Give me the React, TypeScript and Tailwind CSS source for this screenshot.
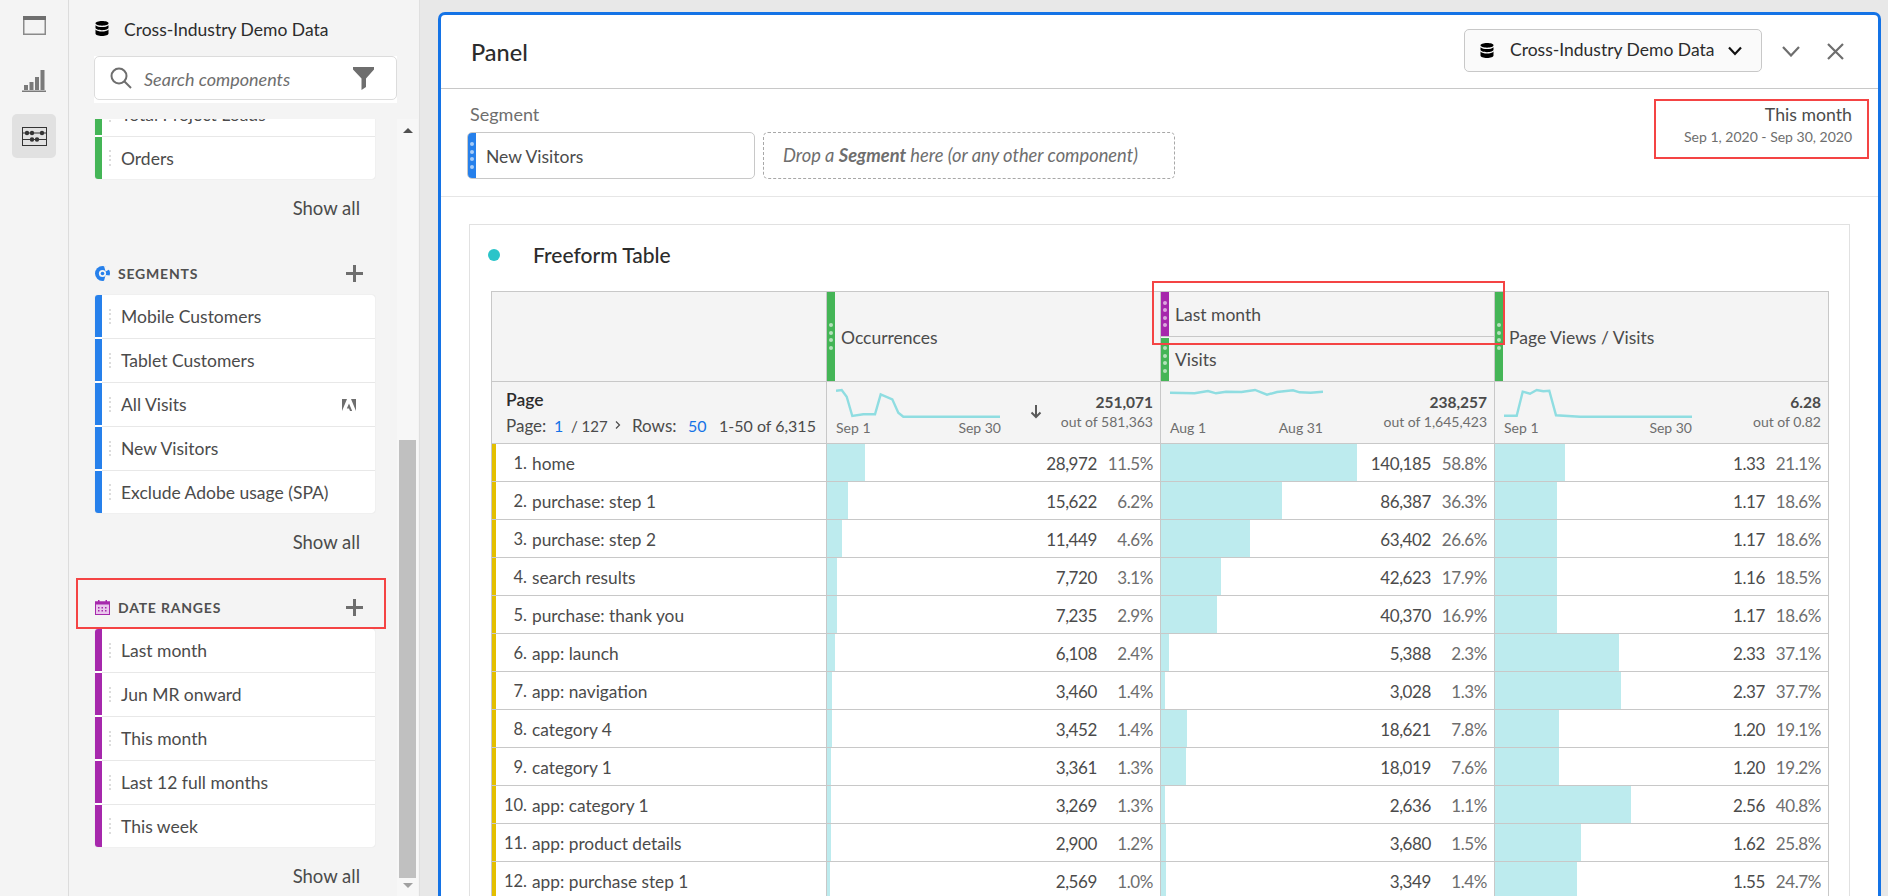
import React from "react";

const rows: [string, string, number, string, number, string, number][] = [
  ["home", "28,972", 11.5, "140,185", 58.8, "1.33", 21.1],
  ["purchase: step 1", "15,622", 6.2, "86,387", 36.3, "1.17", 18.6],
  ["purchase: step 2", "11,449", 4.6, "63,402", 26.6, "1.17", 18.6],
  ["search results", "7,720", 3.1, "42,623", 17.9, "1.16", 18.5],
  ["purchase: thank you", "7,235", 2.9, "40,370", 16.9, "1.17", 18.6],
  ["app: launch", "6,108", 2.4, "5,388", 2.3, "2.33", 37.1],
  ["app: navigation", "3,460", 1.4, "3,028", 1.3, "2.37", 37.7],
  ["category 4", "3,452", 1.4, "18,621", 7.8, "1.20", 19.1],
  ["category 1", "3,361", 1.3, "18,019", 7.6, "1.20", 19.2],
  ["app: category 1", "3,269", 1.3, "2,636", 1.1, "2.56", 40.8],
  ["app: product details", "2,900", 1.2, "3,680", 1.5, "1.62", 25.8],
  ["app: purchase step 1", "2,569", 1.0, "3,349", 1.4, "1.55", 24.7],
];

function Db({ className }: { className: string }) {
  return (
    <svg viewBox="0 0 14 15" className={className} fill="currentColor">
      <path d="M7 0C3.400 0 .5 1 .5 2.300S3.400 4.700 7 4.700s6.500-1 6.500-2.400S10.600 0 7 0Z" />
      <path d="M.5 4.200v2.600c0 1.300 2.900 2.400 6.500 2.400s6.500-1.100 6.500-2.400V4.200C12.200 5.500 9.800 6 7 6S1.800 5.500.5 4.200Z" />
      <path d="M.5 8.600v3.900C.5 13.900 3.400 15 7 15s6.500-1.100 6.500-2.500V8.600C12.200 10 9.800 10.600 7 10.600S1.800 10 .5 8.600Z" />
    </svg>
  );
}

function GripSide() {
  return (
    <div className="flex flex-col gap-[2.5px] w-[2px] shrink-0">
      <span className="h-[2px] w-[2px] bg-[#dcdcdc]" />
      <span className="h-[2px] w-[2px] bg-[#dcdcdc]" />
      <span className="h-[2px] w-[2px] bg-[#dcdcdc]" />
      <span className="h-[2px] w-[2px] bg-[#dcdcdc]" />
    </div>
  );
}

function Grip({ className }: { className: string }) {
  return (
    <div className={"flex flex-col items-center justify-center gap-[3.5px] w-[8px] shrink-0 " + className}>
      <span className="h-[4px] w-[4px] rounded-full bg-white opacity-60" />
      <span className="h-[4px] w-[4px] rounded-full bg-white opacity-60" />
      <span className="h-[4px] w-[4px] rounded-full bg-white opacity-60" />
      <span className="h-[4px] w-[4px] rounded-full bg-white opacity-60" />
    </div>
  );
}

function AdobeMark() {
  return (
    <svg viewBox="0 0 14 12" className="h-[12px] w-[14px] text-[#6e6e6e]" fill="currentColor">
      <path d="M0 0h5L0 12Z" />
      <path d="M9 0h5v12Z" />
      <path d="M7 4.500 10.200 12H8L7 9.600H4.800Z" />
    </svg>
  );
}

function SideList({ color, items }: { color: string; items: [string, React.ReactNode?][] }) {
  return (
    <div className="w-[280px] overflow-hidden rounded-[3px] bg-white shadow-[0_0_1px_#c8c8c8]">
      {items.map(([t, icon], i) => (
        <div key={t} className={"flex " + (i === items.length - 1 ? "h-[42px]" : "h-[44px]")}>
          <div className={"w-[7px] h-[42px] shrink-0 " + color} />
          <div className={"flex flex-1 items-center pl-[7px] pr-[19px] " + (i === items.length - 1 ? "" : "border-b border-[#e8e8e8]")}>
            <GripSide />
            <span className="ml-[10px] flex-1 pt-[2px] text-[17.500px] text-[#4b4b4b] whitespace-nowrap">{t}</span>
            {icon}
          </div>
        </div>
      ))}
    </div>
  );
}

function ShowAll() {
  return (
    <div className="flex h-[57px] w-[280px] items-center justify-end pr-[15px] pt-[2px] text-[18.500px] text-[#4b4b4b]">Show all</div>
  );
}

function SectionHead({ icon, title, red }: { icon: React.ReactNode; title: string; red?: boolean }) {
  return (
    <div className="relative flex h-[59px] w-[280px] items-center pt-[16px]">
      {icon}
      <span className="ml-[8px] text-[14px] font-bold tracking-[0.8px] text-[#505050]">{title}</span>
      <svg viewBox="0 0 17 17" className="ml-auto mr-[12px] h-[17px] w-[17px] text-[#6e6e6e]" fill="currentColor">
        <path d="M7 0h3v7h7v3h-7v7H7v-7H0V7h7Z" />
      </svg>
      {red && <div className="absolute left-[-19px] top-[8px] h-[51px] w-[310px] border-2 border-[#f44444]" />}
    </div>
  );
}

function Rail() {
  return (
    <div className="flex w-[69px] shrink-0 flex-col items-center border-r border-[#dcdcdc] bg-[#f4f4f4]">
      <svg viewBox="0 0 23 19" className="mt-[16px] h-[19px] w-[23px]">
        <rect x="0.750" y="0.750" width="21.500" height="17.500" fill="none" stroke="#8a8a8a" strokeWidth="1.500" />
        <rect x="0" y="0" width="23" height="4" fill="#6e6e6e" />
      </svg>
      <svg viewBox="0 0 25 22" className="mt-[35px] h-[22px] w-[25px] text-[#7a7a7a]" fill="currentColor">
        <rect x="2" y="15" width="4" height="5" />
        <rect x="7.500" y="12" width="4" height="8" />
        <rect x="13" y="7" width="4" height="13" />
        <rect x="18.500" y="0" width="4" height="20" />
        <rect x="0" y="20.500" width="24" height="1.500" />
      </svg>
      <div className="mt-[22px] flex h-[44px] w-[44px] items-center justify-center rounded-[5px] bg-[#e1e1e1]">
        <svg viewBox="0 0 25 19" className="h-[19px] w-[25px]" fill="#333">
          <rect x="0.500" y="0.500" width="24" height="18" fill="none" stroke="#333" />
          <path d="M1 5.500h23v1H1ZM1 12h23v1H1Z" />
          <circle cx="5" cy="6" r="2.200" />
          <circle cx="10" cy="6" r="2.200" />
          <circle cx="20" cy="6" r="2.200" />
          <circle cx="10" cy="12.500" r="2.200" />
          <circle cx="15" cy="12.500" r="2.200" />
        </svg>
      </div>
    </div>
  );
}

function Sidebar() {
  return (
    <div className="flex h-full w-[351px] shrink-0 flex-col border-r border-[#dfdfdf] bg-[#f4f4f4]">
      <div className="flex h-[56px] shrink-0 items-center pl-[26px]">
        <Db className="h-[15px] w-[14px] text-black" />
        <span className="ml-[15px] pt-[4px] text-[17.500px] text-[#2c2c2c]">Cross-Industry Demo Data</span>
      </div>
      <div className="ml-[25px] h-[47px] w-[303px] shrink-0 bg-white">
        <div className="flex h-[44px] items-center rounded-[5px] border border-[#dcdcdc] pl-[15px] pr-[22px]">
          <svg viewBox="0 0 22 22" className="h-[22px] w-[22px] text-[#6e6e6e]" fill="none" stroke="currentColor" strokeWidth="2">
            <circle cx="9" cy="9" r="7.500" />
            <path d="m14.500 14.500 6.500 6.500" />
          </svg>
          <span className="ml-[12px] flex-1 pt-[3px] text-[18px] italic text-[#6e6e6e]">Search components</span>
          <svg viewBox="0 0 21 23" className="h-[23px] w-[21px] text-[#6e6e6e]" fill="currentColor">
            <path d="M0 0h21v2.500L13 11.500V20l-4.500 3V11.500L0 2.500Z" />
          </svg>
        </div>
      </div>
      <div className="mt-[16px] flex min-h-0 flex-1">
        <div className="w-[328px] shrink-0 overflow-hidden pl-[26px]">
          <div className="mt-[-26px]">
            <SideList
              color="bg-[#44b556]"
              items={[
                ["Total Project Loads", (
                  <svg viewBox="0 0 13 8" className="h-[8px] w-[13px] text-[#8a8a8a]" fill="currentColor">
                    <path d="M0 0h13v8H0Z" />
                  </svg>
                )],
                ["Orders"],
              ]}
            />
            <ShowAll />
            <SectionHead
              title="SEGMENTS"
              icon={
                <svg viewBox="0 0 15 15" className="h-[15px] w-[15px]">
                  <circle cx="7.500" cy="7.500" r="7.500" fill="#2680eb" />
                  <circle cx="7.500" cy="7.500" r="3.600" fill="#f4f4f4" />
                  <circle cx="7.500" cy="7.500" r="1.800" fill="#2680eb" />
                  <path d="m9 0 1.600 5.500L15 3V1ZM15 9.500l-4.400-.5L9 15h3l3-3Z" fill="#f4f4f4" />
                </svg>
              }
            />
            <SideList
              color="bg-[#2680eb]"
              items={[["Mobile Customers"], ["Tablet Customers"], ["All Visits", <AdobeMark />], ["New Visitors"], ["Exclude Adobe usage (SPA)"]]}
            />
            <ShowAll />
            <SectionHead
              red
              title="DATE RANGES"
              icon={
                <svg viewBox="0 0 15 15" className="h-[15px] w-[15px]">
                  <rect x="0.500" y="2" width="14" height="12.500" fill="#e9c6ec" stroke="#a628ac" />
                  <path d="M0 1.500h15v3H0ZM3 0h1.500v2H3ZM10.500 0H12v2h-1.500ZM3 7h1.500v1.500H3ZM6.500 7H8v1.500H6.500ZM10 7h1.500v1.500H10ZM3 10h1.500v1.500H3ZM6.500 10H8v1.500H6.500ZM10 10h1.500v1.500H10Z" fill="#a628ac" />
                </svg>
              }
            />
            <SideList
              color="bg-[#a628ac]"
              items={[["Last month"], ["Jun MR onward"], ["This month"], ["Last 12 full months"], ["This week"]]}
            />
            <ShowAll />
          </div>
        </div>
        <div className="flex w-[21px] shrink-0 flex-col items-center bg-[#f7f7f7]">
          <div className="flex h-[321px] w-full justify-center pt-[9px]">
            <div className="h-0 w-0 border-x-[5px] border-b-[5px] border-x-transparent border-b-[#505050]" />
          </div>
          <div className="h-[438px] w-[17px] shrink-0 bg-[#c0c0c0]" />
          <div className="flex w-full justify-center pt-[5px]">
            <div className="h-0 w-0 border-x-[5px] border-t-[5px] border-x-transparent border-t-[#a0a0a0]" />
          </div>
        </div>
      </div>
    </div>
  );
}

function Spark({ pts, w, from, to }: { pts: string; w: number; from: string; to: string }) {
  return (
    <div className="ml-[9px] shrink-0" style={{ width: w }}>
      <svg width={w} height={38} viewBox={`0 0 ${w} 38`} className="block">
        <polyline points={pts} fill="none" stroke="#8fdde1" strokeWidth="2.400" />
      </svg>
      <div className="flex justify-between text-[14px] leading-[16px] text-[#6e6e6e]">
        <span>{from}</span>
        <span>{to}</span>
      </div>
    </div>
  );
}

function Totals({ a, b }: { a: string; b: string }) {
  return (
    <div className="ml-auto pt-[10px] pr-[7px] text-right">
      <div className="text-[15.500px] font-bold leading-[20px] text-[#4b4b4b]">{a}</div>
      <div className="text-[14px] leading-[20px] text-[#6e6e6e]">{b}</div>
    </div>
  );
}

function DataCell({ v, p, bar }: { v: string; p: number; bar: number }) {
  return (
    <div className="relative flex items-center justify-end border-l border-[#c8c8c8] pr-[7px] pt-[2px] text-[17px] tracking-[-0.400px] text-[#4b4b4b]">
      <div className="absolute inset-y-0 left-0 bg-[#bdebee]" style={{ width: `${bar}%` }} />
      <span className="relative">{v}</span>
      <span className="relative w-[56px] text-right text-[#6e6e6e]">{p.toFixed(1)}%</span>
    </div>
  );
}

function Table() {
  return (
    <div className="w-[1338px] border-x border-t border-[#c8c8c8]">
      <div className="grid h-[90px] grid-cols-[334px_334px_334px_334px] border-b border-[#c8c8c8] bg-[#f4f4f4] text-[17.500px] text-[#4b4b4b]">
        <div />
        <div className="flex border-l border-[#c8c8c8]">
          <Grip className="bg-[#44b556]" />
          <span className="ml-[6px] self-center pt-[3px]">Occurrences</span>
        </div>
        <div className="relative flex flex-col border-l border-[#c8c8c8]">
          <div className="flex h-[45px] border-b border-[#c8c8c8]">
            <Grip className="bg-[#a628ac]" />
            <span className="ml-[6px] self-center pt-[2px]">Last month</span>
          </div>
          <div className="flex flex-1 pt-[1px]">
            <Grip className="bg-[#44b556]" />
            <span className="ml-[6px] self-center pt-[2px]">Visits</span>
          </div>
          <div className="absolute left-[-9px] top-[-11px] h-[64px] w-[353px] border-2 border-[#f44444]" />
        </div>
        <div className="flex border-l border-[#c8c8c8]">
          <Grip className="bg-[#44b556]" />
          <span className="ml-[6px] self-center pt-[3px]">Page Views / Visits</span>
        </div>
      </div>
      <div className="grid h-[62px] grid-cols-[334px_334px_334px_334px] border-b border-[#c8c8c8] bg-[#f4f4f4]">
        <div className="pl-[14px] pt-[7px]">
          <div className="text-[17.500px] font-semibold leading-[22px] text-[#2c2c2c]">Page</div>
          <div className="mt-[4px] flex whitespace-nowrap text-[16px] leading-[22px] text-[#4b4b4b]">
            <span className="w-[48px] shrink-0 text-[17px]">Page:</span>
            <span className="w-[17px] shrink-0 text-[#1473e6]">1</span>
            <span className="w-[42px] shrink-0 text-[15px]">/ 127</span>
            <span className="w-[19px] shrink-0 pl-[2px] pt-[6px]">
              <svg viewBox="0 0 6 8" className="block h-[8px] w-[6px]" fill="none" stroke="#4b4b4b" strokeWidth="1.200">
                <path d="m1 .5 3.500 3.500L1 7.500" />
              </svg>
            </span>
            <span className="w-[56px] shrink-0 text-[17px]">Rows:</span>
            <span className="w-[31px] shrink-0 text-[#1473e6]">50</span>
            <span>1-50 of 6,315</span>
          </div>
        </div>
        <div className="flex border-l border-[#c8c8c8]">
          <Spark
            w={165}
            from="Sep 1"
            to="Sep 30"
            pts="0,8.700 5.700,8 10.700,14.700 16.300,34 27.300,32.300 39,32.300 44.700,12.300 56.300,17.300 62.300,30.700 67.300,34.700 164,34.700"
          />
          <svg viewBox="0 0 12 14" className="ml-[29px] mt-[23px] h-[14px] w-[12px]" fill="none" stroke="#5a5a5a" strokeWidth="2">
            <path d="M6 0v12M1.500 7.500 6 12l4.500-4.500" />
          </svg>
          <Totals a="251,071" b="out of 581,363" />
        </div>
        <div className="flex border-l border-[#c8c8c8]">
          <Spark
            w={153}
            from="Aug 1"
            to="Aug 31"
            pts="0,10.700 24.600,11.300 38,9 46,11.300 56,9.700 71.500,10 85,8 97,12.700 107,10 123,8.300 129.600,10.300 140.700,10.700 153,9.700"
          />
          <Totals a="238,257" b="out of 1,645,423" />
        </div>
        <div className="flex border-l border-[#c8c8c8]">
          <Spark
            w={188}
            from="Sep 1"
            to="Sep 30"
            pts="0,33.700 12.700,33.700 18.700,9.700 26,11.700 32.700,8 39.300,9.300 45.300,8.700 52,33.300 76,34.700 188,34.700"
          />
          <Totals a="6.28" b="out of 0.82" />
        </div>
      </div>
      {rows.map((r, i) => (
        <div key={r[0]} className="grid h-[38px] grid-cols-[334px_334px_334px_334px] border-b border-[#c8c8c8]">
          <div className="flex items-center border-l-[4px] border-[#e3bf00] pt-[2px] text-[#4b4b4b]">
            <span className="w-[31px] text-right text-[16.500px]">{i + 1}.</span>
            <span className="ml-[5px] text-[17.300px]">{r[0]}</span>
          </div>
          <DataCell v={r[1]} p={r[2]} bar={r[2]} />
          <DataCell v={r[3]} p={r[4]} bar={r[4]} />
          <DataCell v={r[5]} p={r[6]} bar={r[6]} />
        </div>
      ))}
    </div>
  );
}

function Panel() {
  return (
    <div className="mt-[12px] ml-[18px] mr-[7px] flex min-w-0 flex-1 flex-col rounded-t-[7px] border-x-[3px] border-t-[3px] border-[#1473e6] bg-white">
      <div className="flex h-[74px] shrink-0 items-center border-b border-[#c8c8c8] pl-[30px]">
        <span className="pt-[3px] text-[23.500px] font-medium text-[#2c2c2c]">Panel</span>
        <div className="ml-auto mb-[2px] flex h-[43px] w-[298px] items-center rounded-[5px] border border-[#c8c8c8] bg-[#fafafa] pl-[15px]">
          <Db className="h-[15px] w-[14px] text-black" />
          <span className="ml-[16px] text-[17.500px] text-[#2c2c2c]">Cross-Industry Demo Data</span>
          <svg viewBox="0 0 14 10" className="ml-[14px] h-[10px] w-[14px]" fill="none" stroke="#111" strokeWidth="2.200">
            <path d="m1 1.500 6 6.500 6-6.500" />
          </svg>
        </div>
        <svg viewBox="0 0 18 11" className="ml-[20px] h-[11px] w-[18px]" fill="none" stroke="#6e6e6e" strokeWidth="2.200">
          <path d="m1 1 8 8.500L17 1" />
        </svg>
        <svg viewBox="0 0 17 17" className="ml-[27px] mr-[34px] h-[17px] w-[17px]" fill="none" stroke="#6e6e6e" strokeWidth="2.200">
          <path d="m1 1 15 15M16 1 1 16" />
        </svg>
      </div>
      <div className="flex h-[108px] shrink-0 justify-between border-b border-[#e6e6e6] pl-[26px] pr-[26px] pt-[15px]">
        <div>
          <div className="ml-[3px] text-[18px] leading-[20px] text-[#6e6e6e]">Segment</div>
          <div className="mt-[8px] flex gap-[9px]">
            <div className="flex h-[47px] w-[288px] overflow-hidden rounded-[5px] border border-[#c8c8c8]">
              <Grip className="bg-[#2680eb]" />
              <span className="ml-[10px] self-center pt-[3px] text-[17.500px] text-[#4b4b4b]">New Visitors</span>
            </div>
            <div className="ml-[-1px] flex h-[47px] w-[412px] items-center rounded-[5px] border border-dashed border-[#a8a8a8] pl-[19px] pt-[1px] text-[18.300px] italic text-[#6e6e6e]">
              <span>
                Drop a <b className="font-bold">Segment</b> here (or any other component)
              </span>
            </div>
          </div>
        </div>
        <div className="relative pt-[1px] text-right">
          <div className="text-[17.700px] leading-[20px] text-[#4b4b4b]">This month</div>
          <div className="mt-[2px] text-[14px] leading-[20px] text-[#6e6e6e]">Sep 1, 2020 - Sep 30, 2020</div>
          <div className="absolute right-[-17px] top-[-5px] h-[60px] w-[215px] border-2 border-[#f44444]" />
        </div>
      </div>
      <div className="ml-[28px] mt-[27px] w-[1381px] flex-1 border border-b-0 border-[#e1e1e1] pl-[21px]">
        <div className="flex h-[66px] items-center pb-[7px]">
          <span className="ml-[-3px] h-[12px] w-[12px] rounded-full bg-[#2ac4c9]" />
          <span className="ml-[33px] text-[21px] font-medium text-[#2c2c2c]">Freeform Table</span>
        </div>
        <Table />
      </div>
    </div>
  );
}

export default function App() {
  return (
    <div className="flex h-[896px] w-[1888px] overflow-hidden bg-[#e8e8e8] [font-family:Lato,sans-serif]">
      <Rail />
      <Sidebar />
      <Panel />
    </div>
  );
}
